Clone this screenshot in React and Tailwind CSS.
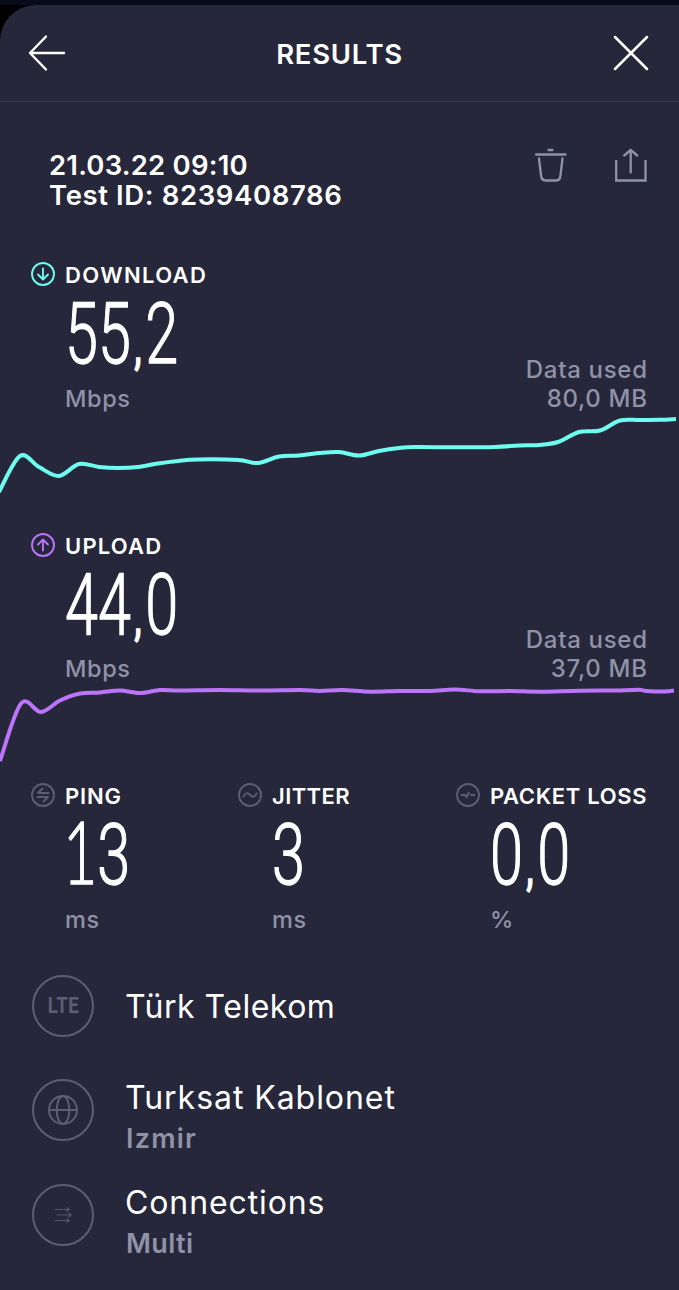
const DOWNLOAD_POINTS = [
  [-1, 79], [20, 43], [39, 54], [59, 63], [79, 51], [99, 54], [118, 55], [138, 54],
  [158, 50.5], [178, 48], [198, 46.5], [238, 47], [258, 50], [279, 43.5], [299, 42.5],
  [319, 40], [339, 39], [359, 42.5], [379, 38], [399, 35], [415, 34], [455, 34.3],
  [495, 34], [519, 32.5], [539, 32], [558, 29], [579, 19], [600, 17.5], [620, 7.5],
  [640, 7], [660, 6.8], [676, 6],
];

const UPLOAD_POINTS = [
  [0, 78], [21, 20.5], [41, 29], [60, 17.5], [80, 10.5], [100, 9.5], [120, 7.5], [140, 10],
  [160, 7], [180, 7.5], [220, 7], [260, 7.5], [300, 7], [320, 8], [342, 7],
  [370, 8.7], [400, 8], [430, 8], [455, 6.5], [480, 8.3], [510, 8], [540, 8.7],
  [580, 7.7], [620, 7.5], [639, 6.7], [646, 7.9], [665, 8.5], [674, 7.5],
];

// Smooth curve through all samples
function toPath(points) {
  let d = `M${points[0][0]} ${points[0][1]}`;
  for (let i = 0; i < points.length - 1; i++) {
    const p0 = points[i - 1] || points[i];
    const p1 = points[i];
    const p2 = points[i + 1];
    const p3 = points[i + 2] || p2;
    d += ` C${p1[0] + (p2[0] - p0[0]) / 6} ${p1[1] + (p2[1] - p0[1]) / 6}`;
    d += ` ${p2[0] - (p3[0] - p1[0]) / 6} ${p2[1] - (p3[1] - p1[1]) / 6} ${p2[0]} ${p2[1]}`;
  }
  return d;
}

// Lato's 1 has a foot; the comma is set smaller and heavier than the digits
const CHAR_CLASSES = {
  '1': "font-['Lato',sans-serif] leading-[0] -ml-[3px]",
  ',': 'font-medium text-[48px] leading-[0] px-[5px]',
};

function BadgeIcon({ className, children }) {
  return (
    <svg viewBox="0 0 24 24" fill="none" stroke="currentColor" strokeWidth="1.9"
      strokeLinecap="round" strokeLinejoin="round" className={`w-6 h-6 flex-shrink-0 ${className}`}>
      <circle cx="12" cy="12" r="11" />
      {children}
    </svg>
  );
}

function Metric({ icon, label, labelClass, value, unit, unitClass }) {
  return (
    <div>
      <div className="flex items-center h-6 gap-2.5">
        {icon}
        <span className={`pt-0.5 text-[22px] leading-6 font-semibold whitespace-nowrap ${labelClass}`}>{label}</span>
      </div>
      <div className="pl-[34px]">
        <div className="h-20 mt-[7px] font-['Roboto',sans-serif] font-light text-[86px] leading-[82px] origin-left scale-x-[0.69] whitespace-nowrap [-webkit-text-stroke:1.3px_white]">
          {value.split('').map((c, i) => (
            <span key={i} className={CHAR_CLASSES[c]}>{c}</span>
          ))}
        </div>
        <div className={`text-[23.5px] leading-[29px] font-medium tracking-[0.6px] text-[#9092a8] ${unitClass}`}>{unit}</div>
      </div>
    </div>
  );
}

function SpeedSection({ used, points, color, className, ...metric }) {
  return (
    <section className={className}>
      <div className="flex items-end justify-between pl-[31px] pr-8">
        <Metric {...metric} />
        <div className="text-right text-[24px] leading-[29px] font-medium tracking-[0.7px] -mr-[0.7px] text-[#9092a8]">
          <div>Data used</div>
          <div>{used}</div>
        </div>
      </div>
      <svg viewBox="0 0 679 82" className="block w-full h-[82px]" fill="none">
        <path d={toPath(points)} stroke={color} strokeWidth="4" strokeLinejoin="round" />
      </svg>
    </section>
  );
}

function InfoRow({ icon, title, titleClass, subtitle, subtitleClass }) {
  return (
    <div className="flex items-start gap-8">
      <div className="w-[62px] h-[62px] mt-px flex-shrink-0 rounded-full border-2 border-[#5d5e73] text-[#5d5e73] flex items-center justify-center">
        {icon}
      </div>
      <div>
        <div className={`-ml-px text-[32px] leading-10 ${titleClass}`}>{title}</div>
        <div className={`mt-px text-[27px] leading-10 font-semibold text-[#9092a8] ${subtitleClass}`}>{subtitle}</div>
      </div>
    </div>
  );
}

export default function App() {
  return (
    <div className="w-[679px] h-[1290px] overflow-hidden bg-black border-t-[5px] border-[#080b1a] font-['Inter',sans-serif] text-white">
      <div className="h-full bg-[#26273a] rounded-tl-[36px]">

        {/* Header */}
        <header className="flex items-center justify-between h-[97px] pl-7 pr-[30px] border-b border-[#39394c]">
          <svg viewBox="0 0 38 38" className="w-[38px] h-[38px]" fill="none" stroke="currentColor"
            strokeWidth="2.4" strokeLinecap="round" strokeLinejoin="round">
            <path d="M18 2.500 2 19l16 16.500M2 19h34" />
          </svg>
          <h1 className="pt-0.5 text-[27.5px] leading-8 font-semibold tracking-[0.7px]">RESULTS</h1>
          <svg viewBox="0 0 36 36" className="w-9 h-9" fill="none" stroke="currentColor" strokeWidth="2.5" strokeLinecap="round">
            <path d="M2 2l32 32M34 2 2 34" />
          </svg>
        </header>

        {/* Test info and actions */}
        <div className="flex justify-between mt-12 pl-[49px] pr-8 h-[60px]">
          <div className="text-[27.5px] leading-[30px] font-semibold">
            <div className="tracking-[0.2px]">21.03.22 09:10</div>
            <div className="tracking-[0.62px]">Test ID: 8239408786</div>
          </div>
          <div className="flex gap-12 -mt-[2px] text-[#9092a8]">
            <svg viewBox="0 0 32 34" className="w-8 h-[34px]" fill="none" stroke="currentColor" strokeWidth="2.300" strokeLinecap="round">
              <path d="M13.500 2h4M1 6.500h29.500" />
              <path d="M4 10.500 6.100 28c.4 3 2 4.500 4.700 4.500h9.900c2.700 0 4.300-1.500 4.700-4.500l2.100-17.500" />
            </svg>
            <svg viewBox="0 0 32 34" className="w-8 h-[34px]" fill="none" stroke="currentColor" strokeWidth="2.300">
              <path d="M1.200 12v20.500h29.300V12" />
              <path d="M15.700 24.500V2.500M9.200 7.500l6.500-5.500 6.500 5.500" strokeLinecap="round" strokeLinejoin="round" />
            </svg>
          </div>
        </div>

        <SpeedSection
          className="mt-[52px]"
          label="DOWNLOAD"
          labelClass="tracking-[1.35px]"
          value="55,2"
          unit="Mbps"
          unitClass="mt-[11px]"
          used="80,0 MB"
          points={DOWNLOAD_POINTS}
          color="#6dfcef"
          icon={<BadgeIcon className="text-[#6dfcef]"><path d="M12 6.500v11M7 12.500l5 5 5-5" /></BadgeIcon>}
        />

        <SpeedSection
          className="mt-[38px]"
          label="UPLOAD"
          labelClass="tracking-[1.2px]"
          value="44,0"
          unit="Mbps"
          unitClass="mt-2.5"
          used="37,0 MB"
          points={UPLOAD_POINTS}
          color="#bc74fa"
          icon={<BadgeIcon className="text-[#bc74fa]"><path d="M12 17.500v-11M7 11.500l5-5 5 5" /></BadgeIcon>}
        />

        {/* Latency figures */}
        <div className="grid grid-cols-[207px_218px_auto] mt-[18px] pl-[31px]">
          <Metric label="PING" labelClass="tracking-[0.8px]" value="13" unit="ms" unitClass="mt-[11px]"
            icon={<BadgeIcon className="text-[#5d5e73]"><path d="M17.500 10H7l4.500-4.500M6.500 14H17l-4.500 4.500" /></BadgeIcon>} />
          <Metric label="JITTER" labelClass="tracking-[0.4px]" value="3" unit="ms" unitClass="mt-[11px]"
            icon={<BadgeIcon className="text-[#5d5e73]"><path d="M5.500 13.500c1.500-4 4-4 6.500-1.500s5 2.500 6.500-1.500" /></BadgeIcon>} />
          <Metric label="PACKET LOSS" labelClass="tracking-[0.65px]" value="0,0" unit="%" unitClass="mt-[11px]"
            icon={<BadgeIcon className="text-[#5d5e73]"><path d="M5.500 12h3.500l1.500 2.200 2.500-4.700M15 12h3.500" /></BadgeIcon>} />
        </div>

        {/* Connection details */}
        <div className="flex flex-col pl-8 mt-[41px]">
          <div className="flex items-center gap-8 mb-[41px]">
            <div className="w-[62px] h-[62px] rounded-full border-2 border-[#5d5e73] text-[#5d5e73] flex items-center justify-center">
              <span className="font-['Roboto',sans-serif] font-bold text-[22px] leading-none tracking-[0.5px] scale-x-[0.85]">LTE</span>
            </div>
            <div className="-ml-px pt-0.5 text-[32px] leading-10 tracking-[0.5px]">Türk Telekom</div>
          </div>
          <InfoRow
            title="Turksat Kablonet"
            titleClass="tracking-[0.95px]"
            subtitle="Izmir"
            subtitleClass="tracking-[1.2px]"
            icon={
              <svg viewBox="0 0 30 30" className="w-[30px] h-[30px]" fill="none" stroke="currentColor" strokeWidth="2">
                <circle cx="15" cy="15" r="14" />
                <ellipse cx="15" cy="15" rx="6.300" ry="14" />
                <path d="M1 15h28" />
              </svg>
            }
          />
          <div className="mt-6">
            <InfoRow
              title="Connections"
              titleClass="tracking-[0.9px]"
              subtitle="Multi"
              subtitleClass="tracking-[0.4px]"
              icon={
                <svg viewBox="0 0 18 18" className="w-[18px] h-[18px]" fill="none" stroke="currentColor" strokeWidth="1.100">
                  <path d="M1 3.500h13M3 9h13M1 14.500h13" strokeDasharray="2.500 .5" />
                  <path d="M12.500 1.500l2.500 2-2.500 2M14.500 7l2.500 2-2.500 2M12.500 12.500l2.500 2-2.500 2" />
                </svg>
              }
            />
          </div>
        </div>
      </div>
    </div>
  );
}
